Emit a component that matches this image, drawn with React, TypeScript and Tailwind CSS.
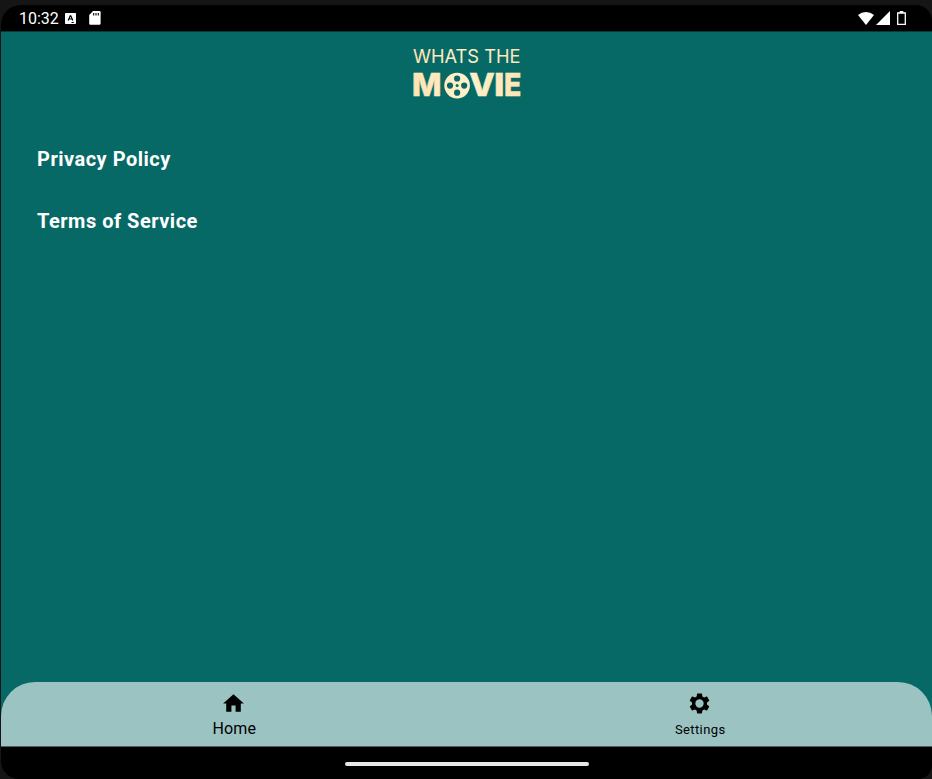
import React from "react";

function StatusBar() {
  return (
    <div className="flex h-[26px] shrink-0 items-start justify-between pl-[18px] pr-[26px] text-white">
      <div className="flex h-[26px] items-center">
        <span className="w-[46px] whitespace-nowrap pt-px text-[16px] leading-[26px]">10:32</span>
        <svg width="11" height="11" viewBox="0 0 11 11" className="mt-px">
          <rect width="11" height="11" rx="0.7" fill="#fff" />
          <path d="M3.2 7.5 5.2 2.8h.6l2 4.7M4 6h3" fill="none" stroke="#000" strokeWidth="1.2" />
          <path d="M6.5 9.5h2.3" stroke="#000" strokeWidth="1" />
        </svg>
        <svg width="12" height="14" viewBox="0 0 12 14" className="ml-[13px]">
          <path d="M4 0h6.5Q11.6 0 11.6 1.2v11.3Q11.6 13.8 10.4 13.8H1.4Q.2 13.8.2 12.5V4Z" fill="#fff" />
          <path d="M4.7 2v2.5M7 2v2.5M9.3 2v2.5" stroke="#000" strokeWidth="1.1" />
        </svg>
      </div>
      <div className="flex h-[26px] items-center">
        <svg width="16" height="13" viewBox="0 0 16 13">
          <path d="M8 13 0 3Q3.5 0 8 0t8 3Z" fill="#fff" />
        </svg>
        <svg width="14" height="14" viewBox="0 0 14 14" className="ml-[2px]">
          <path d="M14 0v14H0Z" fill="#fff" />
        </svg>
        <svg width="9" height="14" viewBox="0 0 9 14" className="ml-[7px]">
          <path d="M.7 2h7.6v11.3H.7Z" fill="none" stroke="#fff" strokeWidth="1.3" />
          <path d="M2.7 0h3.6v2H2.7Z" fill="#fff" />
        </svg>
      </div>
    </div>
  );
}

function Logo() {
  return (
    <svg width="112" height="62" viewBox="0 0 112 62" className="mx-auto block" role="img" aria-label="Whats the movie">
      <defs>
        <linearGradient id="cream" gradientUnits="userSpaceOnUse" x1="0" y1="0" x2="112" y2="0">
          <stop offset="0" stopColor="#ffe2b4" />
          <stop offset="0.5" stopColor="#fff2ca" />
          <stop offset="1" stopColor="#ffe2b4" />
        </linearGradient>
      </defs>
      <g fill="url(#cream)" className="font-['Inter',sans-serif]">
        <text x="2" y="18.3" fontSize="19" textLength="107.5" lengthAdjust="spacingAndGlyphs">WHATS THE</text>
        <g className="font-extrabold" fontSize="31.5" stroke="url(#cream)" strokeWidth="0.5">
          <text x="1" y="51.3" textLength="29.5" lengthAdjust="spacingAndGlyphs">M</text>
          <text x="58.3" y="51.3" textLength="25.5" lengthAdjust="spacingAndGlyphs">V</text>
          <text x="83" y="51.3" textLength="10.5" lengthAdjust="spacingAndGlyphs">I</text>
          <text x="93" y="51.3" textLength="17.3" lengthAdjust="spacingAndGlyphs">E</text>
        </g>
        <circle cx="46.1" cy="40.6" r="12.8" />
      </g>
      <g fill="#076966">
        <circle cx="46.1" cy="33.5" r="3.1" />
        <circle cx="46.1" cy="47.7" r="3.1" />
        <circle cx="39" cy="40.6" r="3.1" />
        <circle cx="53.2" cy="40.6" r="3.1" />
        <circle cx="46.1" cy="40.6" r="1.5" />
      </g>
    </svg>
  );
}

function BottomNav() {
  return (
    <nav className="grid h-[64px] shrink-0 grid-cols-2 rounded-t-[34px] bg-[#9ac3c2] text-black">
      <div className="flex flex-col items-center pt-[9px]">
        <svg width="25" height="25" viewBox="0 0 24 24">
          <path d="M10 20v-6h4v6h5v-8h3L12 3 2 12h3v8Z" />
        </svg>
        <span className="mt-[3px] pl-px text-[16px] leading-[20px] tracking-[0.1px]">Home</span>
      </div>
      <div className="flex flex-col items-center pl-px pt-[9px]">
        <svg width="25" height="25" viewBox="0 0 24 24">
          <path d="M19.14 12.94c.04-.3.06-.61.06-.94 0-.32-.02-.64-.07-.94l2.03-1.58c.18-.14.23-.41.12-.61l-1.92-3.32c-.12-.22-.37-.29-.59-.22l-2.39.96c-.5-.38-1.03-.7-1.62-.94l-.36-2.54c-.04-.24-.24-.41-.48-.41h-3.84c-.24 0-.43.17-.47.41l-.36 2.54c-.59.24-1.13.57-1.62.94l-2.39-.96c-.22-.08-.47 0-.59.22L2.74 8.87c-.12.21-.08.47.12.61l2.03 1.58c-.05.3-.09.63-.09.94s.02.64.07.94l-2.03 1.58c-.18.14-.23.41-.12.61l1.92 3.32c.12.22.37.29.59.22l2.39-.96c.5.38 1.03.7 1.62.94l.36 2.54c.05.24.24.41.48.41h3.84c.24 0 .44-.17.47-.41l.36-2.54c.59-.24 1.13-.56 1.62-.94l2.39.96c.22.08.47 0 .59-.22l1.92-3.32c.12-.22.07-.47-.12-.61l-2.01-1.58ZM12 16a4 4 0 1 1 0-8 4 4 0 0 1 0 8Z" />
        </svg>
        <span className="mt-[4px] pl-px text-[13px] leading-[20px] tracking-[0.4px]">Settings</span>
      </div>
    </nav>
  );
}

export default function App() {
  return (
    <div className="h-[779px] w-[932px] overflow-hidden bg-[#151515] pl-px pt-[5px] font-['Roboto',sans-serif]">
      <div className="flex h-[774px] flex-col overflow-hidden rounded-bl-[18px] rounded-br-[14px] rounded-tl-[20px] rounded-tr-[16px] bg-black">
        <StatusBar />
        <main className="flex flex-1 flex-col border-t border-[#043c3a] bg-[#076966]">
          <header className="pt-[13px]">
            <Logo />
          </header>
          <div className="flex flex-col gap-[32px] pl-[36px] pt-[37px] text-[20px] font-bold leading-[30px] tracking-[0.5px] text-white">
            <div>Privacy Policy</div>
            <div>Terms of Service</div>
          </div>
          <div className="flex-1" />
          <BottomNav />
        </main>
        <footer className="flex h-[33px] shrink-0 justify-center border-t border-[#486160] pt-[15px]">
          <div className="h-[4px] w-[244px] rounded-full bg-[#e8e8e8]" />
        </footer>
      </div>
    </div>
  );
}
